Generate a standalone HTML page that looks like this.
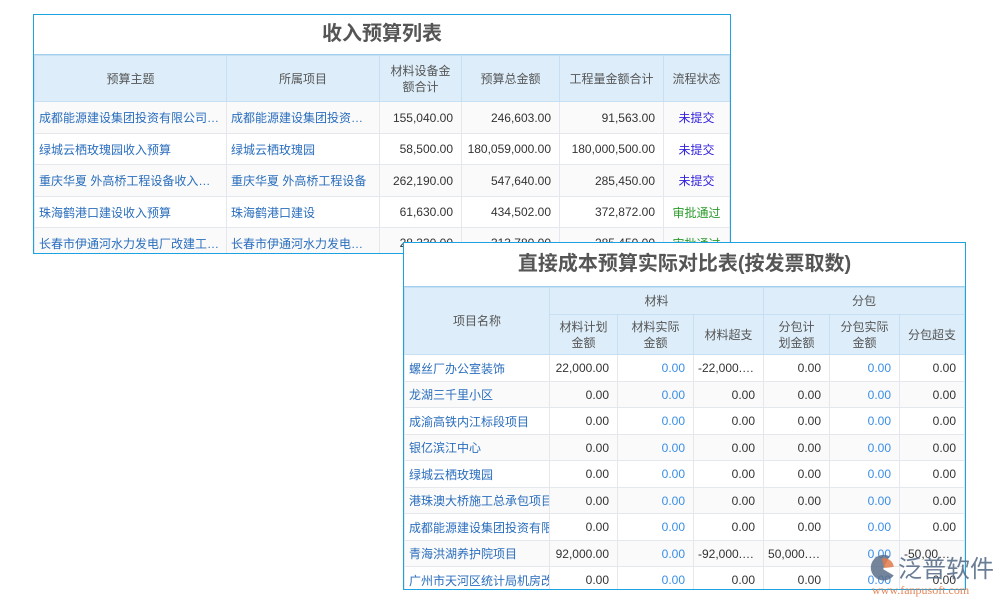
<!DOCTYPE html>
<html><head><meta charset="utf-8"><style>
*{margin:0;padding:0;box-sizing:border-box}
body{width:1000px;height:600px;background:#fff;position:relative;overflow:hidden;font-family:"Liberation Sans","Noto Sans CJK SC",sans-serif;font-size:12px;color:#333}
.box{position:absolute;border:1px solid #1aa3e0;background:#fff;overflow:hidden}
.title{text-align:center;font-weight:bold;color:#555;background:#fff;border-bottom:1px solid #9fd0ef}
table{border-collapse:collapse;table-layout:fixed;width:100%}
td,th{border:1px solid #e4e8ec;white-space:nowrap;overflow:hidden;text-overflow:ellipsis;padding:0 4px}
th{background:#ddeefa;font-weight:normal;color:#555;border-color:#c6dff2;text-align:center;line-height:16px}
td.l{color:#2a6ebd;text-align:left;padding-left:4px}
td.n{text-align:right;padding-right:8px}
td.b{text-align:right;color:#3a8ee6;padding-right:8px}
td.s1{text-align:center;color:#3322dd}
td.s2{text-align:center;color:#2a9a2a}
tr:nth-child(even) td{background:#fafafa}
</style></head><body>
<div class="box" style="left:33px;top:14px;width:698px;height:240px">
<div class="title" style="height:40px;line-height:38px;font-size:20px">收入预算列表</div>
<table>
<colgroup><col style="width:192px"><col style="width:153px"><col style="width:82px"><col style="width:98px"><col style="width:104px"><col></colgroup>
<tr style="height:46px"><th>预算主题</th><th>所属项目</th><th>材料设备金<br>额合计</th><th>预算总金额</th><th>工程量金额合计</th><th>流程状态</th></tr>
<tr style="height:32px"><td class="l">成都能源建设集团投资有限公司临时用电</td><td class="l">成都能源建设集团投资有限公司</td><td class="n">155,040.00</td><td class="n">246,603.00</td><td class="n">91,563.00</td><td class="s1">未提交</td></tr>
<tr style="height:31px"><td class="l">绿城云栖玫瑰园收入预算</td><td class="l">绿城云栖玫瑰园</td><td class="n">58,500.00</td><td class="n">180,059,000.00</td><td class="n">180,000,500.00</td><td class="s1">未提交</td></tr>
<tr style="height:32px"><td class="l">重庆华夏 外高桥工程设备收入预算</td><td class="l">重庆华夏 外高桥工程设备</td><td class="n">262,190.00</td><td class="n">547,640.00</td><td class="n">285,450.00</td><td class="s1">未提交</td></tr>
<tr style="height:31px"><td class="l">珠海鹤港口建设收入预算</td><td class="l">珠海鹤港口建设</td><td class="n">61,630.00</td><td class="n">434,502.00</td><td class="n">372,872.00</td><td class="s2">审批通过</td></tr>
<tr style="height:31px"><td class="l">长春市伊通河水力发电厂改建工程收入预算</td><td class="l">长春市伊通河水力发电厂改建</td><td class="n">28,330.00</td><td class="n">313,780.00</td><td class="n">285,450.00</td><td class="s2">审批通过</td></tr>
</table></div>

<div class="box" style="left:403px;top:242px;width:563px;height:348px">
<div class="title" style="height:44px;line-height:42px;font-size:20px">直接成本预算实际对比表(按发票取数)</div>
<table>
<colgroup><col style="width:145px"><col style="width:68px"><col style="width:76px"><col style="width:70px"><col style="width:66px"><col style="width:70px"><col></colgroup>
<tr style="height:27px"><th rowspan="2">项目名称</th><th colspan="3">材料</th><th colspan="3">分包</th></tr>
<tr style="height:40px"><th>材料计划<br>金额</th><th>材料实际<br>金额</th><th>材料超支</th><th>分包计<br>划金额</th><th>分包实际<br>金额</th><th>分包超支</th></tr>
<tr style="height:27px"><td class="l">螺丝厂办公室装饰</td><td class="n">22,000.00</td><td class="b">0.00</td><td class="n">-22,000.00</td><td class="n">0.00</td><td class="b">0.00</td><td class="n">0.00</td></tr>
<tr style="height:26px"><td class="l">龙湖三千里小区</td><td class="n">0.00</td><td class="b">0.00</td><td class="n">0.00</td><td class="n">0.00</td><td class="b">0.00</td><td class="n">0.00</td></tr>
<tr style="height:27px"><td class="l">成渝高铁内江标段项目</td><td class="n">0.00</td><td class="b">0.00</td><td class="n">0.00</td><td class="n">0.00</td><td class="b">0.00</td><td class="n">0.00</td></tr>
<tr style="height:26px"><td class="l">银亿滨江中心</td><td class="n">0.00</td><td class="b">0.00</td><td class="n">0.00</td><td class="n">0.00</td><td class="b">0.00</td><td class="n">0.00</td></tr>
<tr style="height:27px"><td class="l">绿城云栖玫瑰园</td><td class="n">0.00</td><td class="b">0.00</td><td class="n">0.00</td><td class="n">0.00</td><td class="b">0.00</td><td class="n">0.00</td></tr>
<tr style="height:26px"><td class="l" style="text-overflow:clip">港珠澳大桥施工总承包项目</td><td class="n">0.00</td><td class="b">0.00</td><td class="n">0.00</td><td class="n">0.00</td><td class="b">0.00</td><td class="n">0.00</td></tr>
<tr style="height:27px"><td class="l" style="text-overflow:clip">成都能源建设集团投资有限公司</td><td class="n">0.00</td><td class="b">0.00</td><td class="n">0.00</td><td class="n">0.00</td><td class="b">0.00</td><td class="n">0.00</td></tr>
<tr style="height:26px"><td class="l">青海洪湖养护院项目</td><td class="n">92,000.00</td><td class="b">0.00</td><td class="n">-92,000.00</td><td class="n">50,000.00</td><td class="b">0.00</td><td class="n">-50,000.00</td></tr>
<tr style="height:27px"><td class="l" style="text-overflow:clip">广州市天河区统计局机房改造</td><td class="n">0.00</td><td class="b">0.00</td><td class="n">0.00</td><td class="n">0.00</td><td class="b">0.00</td><td class="n">0.00</td></tr>
</table></div>

<div style="position:absolute;left:866px;top:552px;width:32px;height:32px">
<svg width="32" height="32" viewBox="0 0 30 30"><path d="M22 4 A12 12 0 1 0 26 22 L16 16 Z" fill="#5a6f8a" opacity=".85"/><path d="M15 6 A9 9 0 0 1 26 14 L17 15 Z" fill="#e07a4a" opacity=".85"/></svg>
</div>
<div style="position:absolute;left:898px;top:549px;width:102px;white-space:nowrap;font-size:24px;color:#5a6f8a;opacity:.9">泛普软件</div>
<div style="position:absolute;left:872px;top:583px;white-space:nowrap;font-size:12px;color:#e07a4a;font-family:'Liberation Serif',serif;opacity:.9">www.fanpusoft.com</div>
</body></html>
